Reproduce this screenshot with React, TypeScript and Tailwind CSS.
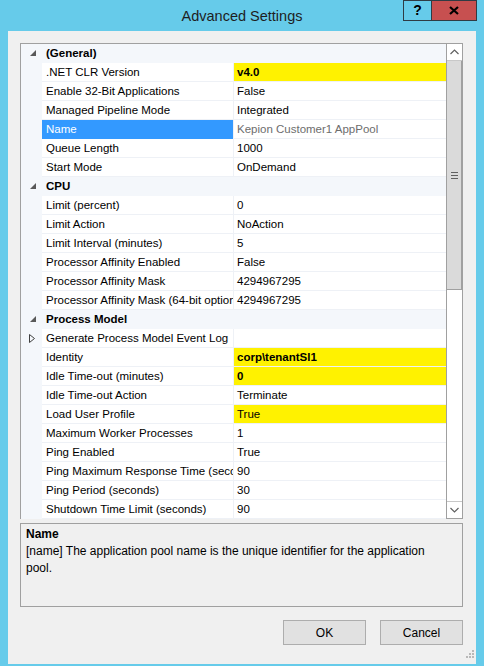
import React from "react";

type Row = {
  label: string;
  value?: string;
  cat?: boolean;
  bold?: boolean;
  yellow?: boolean;
  gray?: boolean;
  selected?: boolean;
  expandable?: boolean;
};

const rows: Row[] = [
  { label: "(General)", cat: true },
  { label: ".NET CLR Version", value: "v4.0", bold: true, yellow: true },
  { label: "Enable 32-Bit Applications", value: "False" },
  { label: "Managed Pipeline Mode", value: "Integrated" },
  { label: "Name", value: "Kepion Customer1 AppPool", gray: true, selected: true },
  { label: "Queue Length", value: "1000" },
  { label: "Start Mode", value: "OnDemand" },
  { label: "CPU", cat: true },
  { label: "Limit (percent)", value: "0" },
  { label: "Limit Action", value: "NoAction" },
  { label: "Limit Interval (minutes)", value: "5" },
  { label: "Processor Affinity Enabled", value: "False" },
  { label: "Processor Affinity Mask", value: "4294967295" },
  { label: "Processor Affinity Mask (64-bit option)", value: "4294967295" },
  { label: "Process Model", cat: true },
  { label: "Generate Process Model Event Log", value: "", expandable: true },
  { label: "Identity", value: "corp\\tenantSl1", bold: true, yellow: true },
  { label: "Idle Time-out (minutes)", value: "0", bold: true, yellow: true },
  { label: "Idle Time-out Action", value: "Terminate" },
  { label: "Load User Profile", value: "True", yellow: true },
  { label: "Maximum Worker Processes", value: "1" },
  { label: "Ping Enabled", value: "True" },
  { label: "Ping Maximum Response Time (seconds)", value: "90" },
  { label: "Ping Period (seconds)", value: "30" },
  { label: "Shutdown Time Limit (seconds)", value: "90" },
];

const Expanded = () => (
  <svg width="6" height="6" viewBox="0 0 6 6">
    <polygon points="6,0 6,6 0,6" fill="#595959" />
  </svg>
);

const Collapsed = () => (
  <svg width="6" height="9" viewBox="0 0 6 9">
    <polygon points="0.5,0.5 5.5,4.5 0.5,8.5" fill="none" stroke="#404040" strokeWidth="1" />
  </svg>
);

const GridRow = ({ row }: { row: Row }) => {
  if (row.cat) {
    return (
      <div className="flex h-[19px] items-center bg-[#f4f7fb] border-b border-[#f4f7fb]">
        <div className="w-[21px] flex justify-center pl-[2px]">
          <Expanded />
        </div>
        <div className="pl-[4px] pt-[2px] font-bold text-black">{row.label}</div>
      </div>
    );
  }
  return (
    <div className="flex h-[19px]">
      <div className="w-[21px] bg-[#f4f7fb] flex items-center justify-center pl-[1px]">
        {row.expandable && <Collapsed />}
      </div>
      <div
        className={
          row.selected
            ? "w-[191px] pl-[4px] pt-[2px] flex items-center bg-[#3399ff] text-white overflow-hidden whitespace-nowrap border-b border-[#3399ff]"
            : "w-[191px] pl-[4px] pt-[2px] flex items-center bg-white text-black overflow-hidden whitespace-nowrap border-b border-[#eef1f6]"
        }
      >
        {row.label}
      </div>
      <div className="w-px bg-[#eef1f6]" />
      <div className="w-[212px] flex flex-col bg-white">
        <div
          className={
            (row.yellow ? "bg-[#fff200] " : "bg-white ") +
            (row.bold ? "font-bold " : "") +
            (row.gray ? "text-[#6d6d6d] " : "text-black ") +
            "h-[18px] flex items-center pl-[3px] pt-[2px] overflow-hidden whitespace-nowrap"
          }
        >
          {row.value}
        </div>
        <div className="h-px bg-[#eef1f6]" />
      </div>
    </div>
  );
};

const ScrollBar = () => (
  <div className="w-[17px] flex flex-col border-l border-[#a0a0a0] bg-white">
    <div className="h-[17px] flex items-center justify-center border-b border-[#c8c8c8] bg-white">
      <svg width="9" height="6" viewBox="0 0 9 6">
        <polyline points="0.5,5 4.5,1 8.5,5" fill="none" stroke="#606060" strokeWidth="1.2" />
      </svg>
    </div>
    <div className="h-[229px] bg-[#dadada] border-b border-r border-[#a0a0a0] flex items-center justify-center">
      <svg width="7" height="7" viewBox="0 0 7 7">
        <rect x="0" y="0" width="7" height="1" fill="#606060" />
        <rect x="0" y="3" width="7" height="1" fill="#606060" />
        <rect x="0" y="6" width="7" height="1" fill="#606060" />
      </svg>
    </div>
    <div className="flex-1 bg-white" />
    <div className="h-[17px] flex items-center justify-center border-t border-[#c8c8c8] bg-white">
      <svg width="9" height="6" viewBox="0 0 9 6">
        <polyline points="0.5,1 4.5,5 8.5,1" fill="none" stroke="#606060" strokeWidth="1.2" />
      </svg>
    </div>
  </div>
);

export default function App() {
  return (
    <div className="w-[484px] h-[666px] bg-[#66cbea] flex flex-col font-['Liberation_Sans',Arial,sans-serif] text-[11.5px] overflow-hidden">
      {/* title bar */}
      <div className="h-[31px] relative flex items-start">
        <div className="absolute left-0 right-0 top-[6px] text-center text-[14.5px] text-[#1e1e1e]">
          Advanced Settings
        </div>
        <div className="ml-auto mr-[7px] flex h-[21px]">
          <div className="w-[29px] border border-[#2f3b44] flex items-center justify-center font-bold text-[14px] text-black">
            ?
          </div>
          <div className="w-[45px] border border-l-0 border-[#2f3b44] bg-[#c75050] flex items-center justify-center">
            <svg width="10" height="9" viewBox="0 0 10 9">
              <path d="M1 1 L9 8 M9 1 L1 8" stroke="#000" strokeWidth="2.2" />
            </svg>
          </div>
        </div>
      </div>

      {/* client */}
      <div className="mx-[8px] h-[633px] bg-[#f0f0f0] pt-[12px] pl-[12px] pr-[13px] flex flex-col relative">
        <div className="h-[476px] border border-[#a0a0a0] bg-white flex">
          <div className="w-[425px] flex flex-col">
            {rows.map((r, i) => (
              <GridRow key={i} row={r} />
            ))}
          </div>
          <ScrollBar />
        </div>

        <div className="mt-[4px] h-[84px] border border-[#a0a0a0] bg-[#f0f0f0] pl-[5px] pr-[24px] pt-[2px] text-black text-[12px] leading-[17px]">
          <div className="font-bold">Name</div>
          <div>
            [name] The application pool name is the unique identifier for the application pool.
          </div>
        </div>

        <div className="mt-[13px] flex justify-end gap-[14px]">
          <button className="w-[83px] h-[25px] bg-[#e1e1e1] border border-[#adadad] text-black text-[12px]">OK</button>
          <button className="w-[83px] h-[25px] bg-[#e1e1e1] border border-[#adadad] text-black text-[12px]">Cancel</button>
        </div>

        <svg className="absolute right-[2px] bottom-[6px]" width="10" height="10" viewBox="0 0 10 10">
          <rect x="8" y="2" width="2" height="2" fill="#b8b8b8" />
          <rect x="5" y="5" width="2" height="2" fill="#b8b8b8" />
          <rect x="8" y="5" width="2" height="2" fill="#b8b8b8" />
          <rect x="2" y="8" width="2" height="2" fill="#b8b8b8" />
          <rect x="5" y="8" width="2" height="2" fill="#b8b8b8" />
          <rect x="8" y="8" width="2" height="2" fill="#b8b8b8" />
        </svg>
      </div>
    </div>
  );
}
